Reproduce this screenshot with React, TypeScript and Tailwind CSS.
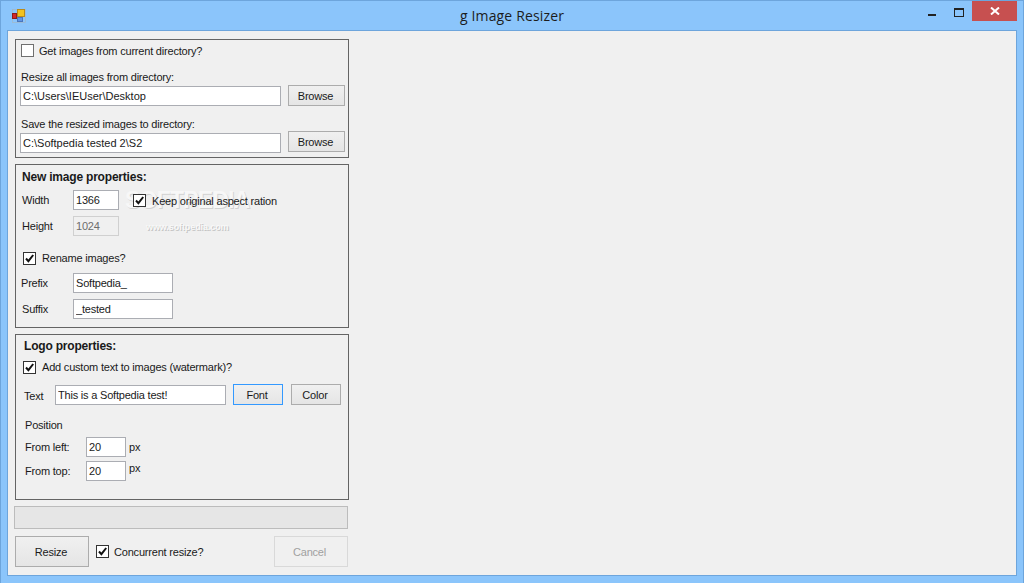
import { FC } from "react";

// Small WinForms style parts
const Check: FC<{ checked?: boolean }> = ({ checked }) => (
  <span
    className={`block w-[13px] h-[13px] shrink-0 bg-white border ${
      checked ? "border-[#333333]" : "border-[#707070]"
    }`}
  >
    {checked && (
      <svg viewBox="0 0 11 11" className="w-[11px] h-[11px]">
        <path d="M2 5.5 L4.4 8.2 L9.2 2" fill="none" stroke="#111111" strokeWidth="2" />
      </svg>
    )}
  </span>
);

const Field: FC<{ value: string; className: string }> = ({ value, className }) => (
  <input
    readOnly
    value={value}
    className={`block h-[20px] bg-white border border-[#abadb3] pl-[2px] outline-none text-[#1a1a1a] ${className}`}
  />
);

const Btn: FC<{ label: string; className: string }> = ({ label, className }) => (
  <button
    className={`block shrink-0 border pr-[2px] bg-gradient-to-b from-[#f0f0f0] to-[#e5e5e5] text-[#1a1a1a] ${className}`}
  >
    {label}
  </button>
);

export default function App() {
  return (
    <div className="w-[1024px] h-[583px] flex flex-col overflow-hidden bg-[#8bc5fb] border-x border-t border-[#6da5dc] font-['Liberation_Sans',Arial,sans-serif] text-[11px] tracking-[-0.2px] leading-[14px] text-[#1a1a1a]">
      {/* title bar */}
      <div className="relative h-[29px] shrink-0 flex items-center justify-center">
        <svg viewBox="0 0 14 14" className="absolute left-[11px] top-[8px] w-[14px] h-[14px]">
          <rect x="0.5" y="0.5" width="13" height="13" fill="none" stroke="#a8b4bd" strokeWidth="0.6" />
          <rect x="5.5" y="0.5" width="7" height="7" fill="#f2c21e" stroke="#b98a1a" />
          <rect x="0.5" y="4.5" width="4" height="5" fill="#d3262a" stroke="#8e1b1b" />
          <rect x="5.5" y="8.5" width="5" height="4" fill="#5f96e6" stroke="#4a76bd" />
        </svg>
        <span className="font-['Open_Sans',sans-serif] text-[14px] tracking-[0.15px] text-[#1c1c1c] pt-[1px]">g Image Resizer</span>
        <div className="absolute right-[6px] top-0 flex items-start">
          <span className="block w-[8px] h-[2px] bg-[#222222] mt-[13px]" />
          <span className="block w-[10px] h-[9px] border border-t-2 border-[#222222] ml-[18px] mt-[7px]" />
          <span className="flex items-center justify-center w-[45px] h-[20px] bg-[#c75050] ml-[8px]">
            <svg viewBox="0 0 10 8" className="w-[10px] h-[8px]">
              <path d="M1 0.5 L9 7.5 M9 0.5 L1 7.5" stroke="#ffffff" strokeWidth="2" />
            </svg>
          </span>
        </div>
      </div>

      {/* client area */}
      <div className="ml-[6px] mr-[6px] w-[1010px] h-[546px] shrink-0 bg-[#f0f0f0] border border-[#6da5dc] pl-[7px] pt-[8px]">
        <div className="w-[334px]">
          {/* directories */}
          <div className="h-[119px] border border-[#646464] pl-[5px]">
            <div className="flex items-start gap-[5px] mt-[4px] h-[13px] leading-[15px]">
              <Check />
              <span>Get images from current directory?</span>
            </div>
            <div className="mt-[13px]">Resize all images from directory:</div>
            <div className="flex items-start mt-[1px] -ml-[1px]">
              <Field value="C:\Users\IEUser\Desktop" className="w-[261px] mt-[1px] tracking-[0px]" />
              <Btn label="Browse" className="w-[57px] h-[21px] ml-[7px] border-[#acacac]" />
            </div>
            <div className="mt-[11px]">Save the resized images to directory:</div>
            <div className="flex items-start -ml-[1px]">
              <Field value="C:\Softpedia tested 2\S2" className="w-[261px] mt-[2px] tracking-[0px]" />
              <Btn label="Browse" className="w-[57px] h-[21px] ml-[7px] border-[#acacac]" />
            </div>
          </div>

          {/* new image properties */}
          <div className="relative h-[164px] mt-[6px] border border-[#646464]">
            <div className="absolute left-[109px] top-[21px] font-bold text-[23px] leading-[28px] tracking-[-0.8px] text-[#f7f7f7] [text-shadow:1px_1px_0_#d2d2d2]">
              SOFTPEDIA
            </div>
            <div className="absolute left-[130px] top-[55px] font-bold text-[9px] tracking-[-0.1px] text-[#f8f8f8] [text-shadow:1px_1px_0_#c4c4c4]">
              www.softpedia.com
            </div>
            <div className="relative">
              <div className="mt-[4px] pl-[6px] h-[16px] font-bold text-[12px] tracking-[-0.2px] leading-[16px]">New image properties:</div>
              <div className="flex items-start mt-[5px]">
                <span className="w-[57px] pl-[6px] leading-[20px]">Width</span>
                <Field value="1366" className="w-[46px]" />
                <div className="flex items-start gap-[6px] ml-[14px] mt-[4px]">
                  <Check checked />
                  <span>Keep original aspect ration</span>
                </div>
              </div>
              <div className="flex items-start mt-[6px]">
                <span className="w-[57px] pl-[6px] leading-[20px]">Height</span>
                <input
                  readOnly
                  disabled
                  value="1024"
                  className="block w-[46px] h-[20px] bg-[#f0f0f0] border border-[#d0d0d0] pl-[2px] text-[#6d6d6d]"
                />
              </div>
              <div className="flex items-center gap-[6px] mt-[16px] pl-[7px] leading-[13px]">
                <Check checked />
                <span>Rename images?</span>
              </div>
              <div className="flex items-start mt-[8px]">
                <span className="w-[57px] pl-[5px] leading-[20px]">Prefix</span>
                <Field value="Softpedia_" className="w-[100px]" />
              </div>
              <div className="flex items-start mt-[6px]">
                <span className="w-[57px] pl-[6px] leading-[20px]">Suffix</span>
                <Field value="_tested" className="w-[100px]" />
              </div>
            </div>
          </div>

          {/* logo properties */}
          <div className="h-[166px] mt-[6px] border border-[#646464]">
            <div className="mt-[3px] pl-[8px] h-[16px] font-bold text-[12px] tracking-[-0.2px] leading-[16px]">Logo properties:</div>
            <div className="flex items-center gap-[6px] mt-[7px] pl-[7px] leading-[13px]">
              <Check checked />
              <span>Add custom text to images (watermark)?</span>
            </div>
            <div className="flex items-start mt-[10px]">
              <span className="w-[39px] pl-[8px] mt-[1px] leading-[22px]">Text</span>
              <Field value="This is a Softpedia test!" className="w-[171px] mt-[1px]" />
              <Btn label="Font" className="w-[50px] h-[21px] ml-[7px] border-[#3399ff]" />
              <Btn label="Color" className="w-[50px] h-[21px] ml-[8px] border-[#acacac]" />
            </div>
            <div className="mt-[11px] pl-[9px]">Position</div>
            <div className="flex items-start mt-[5px]">
              <span className="w-[70px] pl-[9px] leading-[20px]">From left:</span>
              <Field value="20" className="w-[40px]" />
              <span className="ml-[3px] leading-[20px]">px</span>
            </div>
            <div className="flex items-start mt-[4px]">
              <span className="w-[70px] pl-[9px] leading-[20px]">From top:</span>
              <Field value="20" className="w-[40px]" />
              <span className="ml-[3px] leading-[14px]">px</span>
            </div>
          </div>

          {/* progress */}
          <div className="w-[334px] h-[23px] mt-[6px] -ml-[1px] bg-[#e6e6e6] border border-[#bcbcbc]" />

          {/* actions */}
          <div className="flex items-center mt-[7px] h-[31px]">
            <Btn label="Resize" className="w-[74px] h-[31px] border-[#acacac]" />
            <div className="flex items-start gap-[5px] ml-[7px] h-[13px] leading-[15px]">
              <Check checked />
              <span>Concurrent resize?</span>
            </div>
            <button className="block w-[74px] h-[31px] ml-auto mr-[1px] pr-[3px] bg-[#f0f0f0] border border-[#d9d9d9] text-[#a0a0a0]">
              Cancel
            </button>
          </div>
        </div>
      </div>
    </div>
  );
}
